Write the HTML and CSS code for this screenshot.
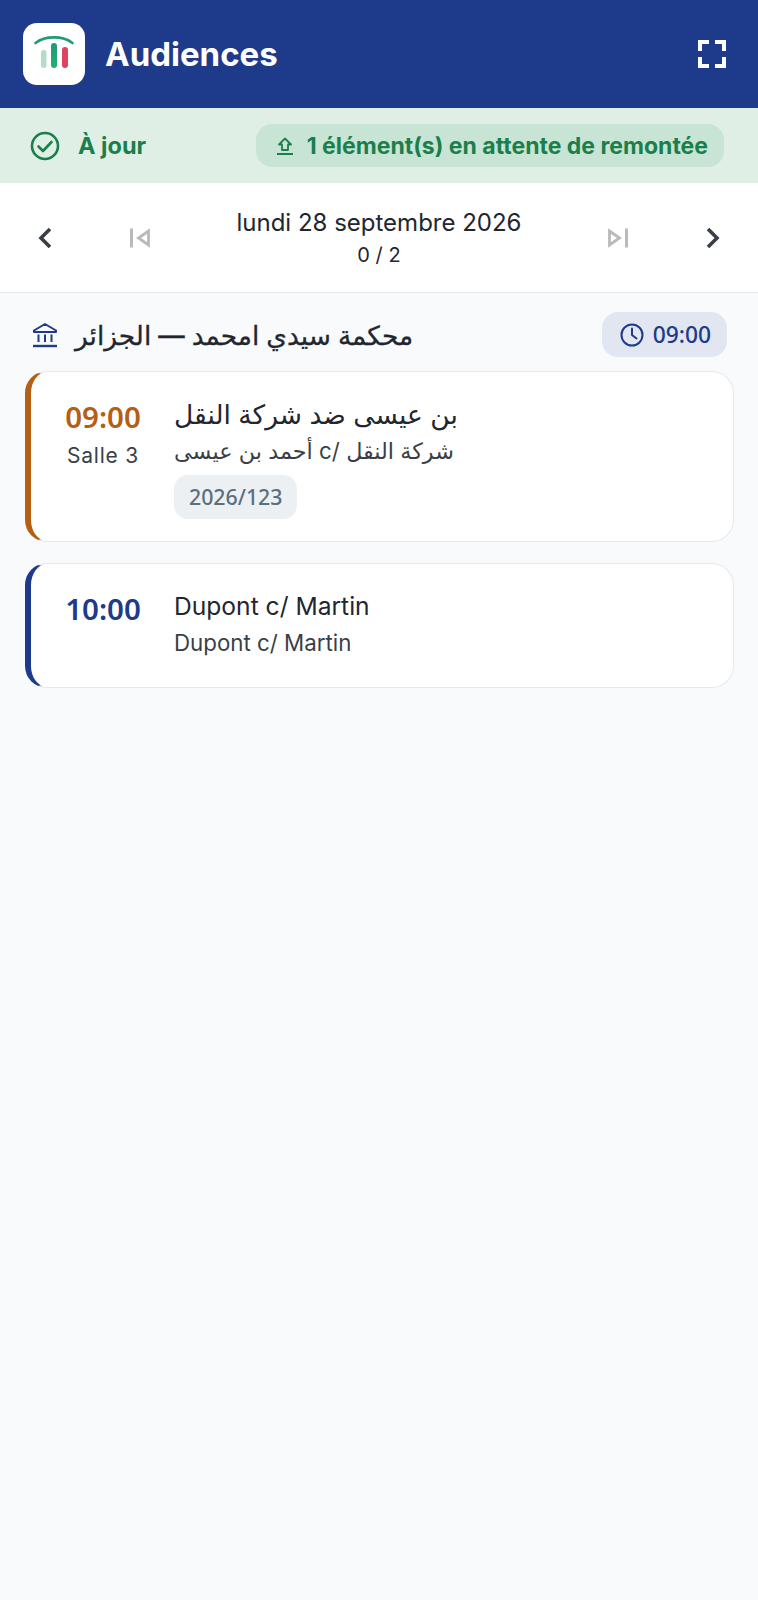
FILE: index.html
```html
<!DOCTYPE html>
<html lang="fr">
<head>
    <meta charset="UTF-8">
    <meta name="viewport" content="width=device-width, initial-scale=1.0">
    <title>Audiences</title>
    <link rel="stylesheet" href="styles.css">
</head>
<body>
    <header class="app-bar">
        <div class="logo">
            <svg width="62" height="62" viewBox="0 0 62 62" fill="none">
                <defs>
                    <linearGradient id="barGreen" x1="0" y1="0" x2="0" y2="1">
                        <stop offset="0" stop-color="#1f9a78"/>
                        <stop offset="1" stop-color="#27ad72"/>
                    </linearGradient>
                </defs>
                <path d="M12.5 20 C 22 12.5, 40 12.5, 49.5 20" stroke="#1f9a78" stroke-width="2.6" stroke-linecap="round"/>
                <rect x="18" y="27" width="5.5" height="18" rx="2.75" fill="#b5dccb"/>
                <rect x="28" y="20" width="6" height="25" rx="3" fill="url(#barGreen)"/>
                <rect x="39" y="24" width="6" height="21" rx="3" fill="#e0435f"/>
            </svg>
        </div>
        <h1>Audiences</h1>
        <svg class="fullscreen" width="28" height="28" viewBox="0 0 28 28" fill="none" stroke="#fff" stroke-width="4">
            <path d="M2 11 V2 H11 M17 2 H26 V11 M26 17 V26 H17 M11 26 H2 V17"/>
        </svg>
    </header>

    <div class="sync-bar">
        <div class="sync-state">
            <svg width="30" height="30" viewBox="0 0 30 30" fill="none" stroke="#1a7f4b" stroke-width="2.6">
                <circle cx="15" cy="15" r="13"/>
                <path d="M8.5 15.5 L13 20 L21.5 11" stroke-linecap="round" stroke-linejoin="round"/>
            </svg>
            <span>À jour</span>
        </div>
        <div class="pending">
            <svg width="18" height="20" viewBox="0 0 18 20" fill="none" stroke="#1a7f4b" stroke-width="1.8">
                <path d="M9 2.5 L15 8.5 H12 V14 H6 V8.5 H3 Z" stroke-linejoin="round"/>
                <path d="M1 18 H17" stroke-width="2"/>
            </svg>
            <span>1 élément(s) en attente de remontée</span>
        </div>
    </div>

    <nav class="day-nav">
        <svg class="chevron" width="20" height="24" viewBox="0 0 20 24" fill="none" stroke="#3a3f47" stroke-width="3.6">
            <path d="M15 3 L6 12 L15 21"/>
        </svg>
        <svg class="skip" width="22" height="22" viewBox="0 0 22 22" fill="none" stroke="#b8babc" stroke-width="2.8">
            <path d="M2.5 1.5 V20.5" stroke-width="3"/>
            <path d="M19.5 4 V18 L9.5 11 Z"/>
        </svg>
        <div class="day-label">
            <div class="day-date">lundi 28 septembre 2026</div>
            <div class="day-count">0 / 2</div>
        </div>
        <svg class="skip" width="22" height="22" viewBox="0 0 22 22" fill="none" stroke="#b8babc" stroke-width="2.8">
            <path d="M19.5 1.5 V20.5" stroke-width="3"/>
            <path d="M2.5 4 V18 L12.5 11 Z"/>
        </svg>
        <svg class="chevron" width="20" height="24" viewBox="0 0 20 24" fill="none" stroke="#3a3f47" stroke-width="3.6">
            <path d="M5 3 L14 12 L5 21"/>
        </svg>
    </nav>

    <main class="content">
        <div class="court-head">
            <svg width="26" height="26" viewBox="0 0 26 26" fill="none" stroke="#1e3a8a" stroke-width="2">
                <path d="M13 2 L24 8.5 V10 H2 V8.5 Z" stroke-linejoin="round"/>
                <path d="M6.5 12.5 V20 M13 12.5 V20 M19.5 12.5 V20"/>
                <path d="M1 24 H25" stroke-width="2.4"/>
            </svg>
            <h2>محكمة سيدي امحمد — الجزائر</h2>
            <div class="first-time">
                <svg width="24" height="24" viewBox="0 0 24 24" fill="none" stroke="#1e3a8a" stroke-width="2">
                    <circle cx="12" cy="12" r="10.5"/>
                    <path d="M12 5.5 V12 L16.5 15.5" stroke-linecap="round" stroke-linejoin="round"/>
                </svg>
                <span>09:00</span>
            </div>
        </div>

        <article class="hearing hearing-late">
            <div class="hearing-time">
                <div class="time">09:00</div>
                <div class="room">Salle 3</div>
            </div>
            <div class="hearing-body">
                <div class="case-title case-title-ar">بن عيسى ضد شركة النقل</div>
                <div class="case-parties">أحمد بن عيسى c/ شركة النقل</div>
                <span class="case-ref">2026/123</span>
            </div>
        </article>

        <article class="hearing">
            <div class="hearing-time">
                <div class="time">10:00</div>
            </div>
            <div class="hearing-body">
                <div class="case-title">Dupont c/ Martin</div>
                <div class="case-parties">Dupont c/ Martin</div>
            </div>
        </article>
    </main>
</body>
</html>
```

FILE: styles.css
```css
:root {
    --navy: #1e3a8a;
    --green: #1a7f4b;
    --amber: #b45f14;
    --ink: #22262e;
    --page-bg: #f8fafc;
}

* {
    box-sizing: border-box;
}

html, body {
    height: 100%;
}

body {
    margin: 0;
    font-family: Inter, "DejaVu Sans", sans-serif;
    background-color: var(--page-bg);
    color: var(--ink);
}

.app-bar {
    height: 108px;
    background: var(--navy);
    display: flex;
    align-items: center;
    padding: 0 32px 0 23px;
}

.logo {
    width: 62px;
    height: 62px;
    background: white;
    border-radius: 14px;
    margin-right: 20px;
}

.logo svg {
    display: block;
}

h1 {
    margin: 0;
    flex: 1;
    color: white;
    font-size: 33px;
    font-weight: 700;
}

.sync-bar {
    height: 75px;
    background: #e0efe6;
    display: flex;
    align-items: center;
    justify-content: space-between;
    padding: 0 34px 0 30px;
    color: var(--green);
    font-weight: 700;
}

.sync-state {
    display: flex;
    align-items: center;
    gap: 18px;
    font-size: 23.5px;
}

.pending {
    display: flex;
    align-items: center;
    gap: 13px;
    height: 43px;
    padding: 0 16px 0 20px;
    background: #c8e4d4;
    border-radius: 16px;
    font-size: 23px;
}

.day-nav {
    height: 110px;
    background: white;
    border-bottom: 1px solid #e2e5e9;
    display: flex;
    align-items: center;
    padding: 0 35px;
}

.chevron:first-child {
    margin-right: 74px;
}

.chevron:last-child {
    margin-left: 74px;
}

.day-label {
    flex: 1;
    text-align: center;
}

.day-date {
    font-size: 24px;
    line-height: 34px;
}

.day-count {
    font-size: 20px;
    line-height: 30px;
}

.content {
    padding: 19px 24px 0;
}

.court-head {
    display: flex;
    align-items: center;
    height: 45px;
    margin-bottom: 14px;
    padding: 0 7px 0 8px;
}

h2 {
    margin: 0 0 0 17px;
    flex: 1;
    font-size: 26.4px;
    font-weight: 500;
    -webkit-text-stroke: 0.3px var(--ink);
}

.first-time {
    display: flex;
    align-items: center;
    gap: 9px;
    height: 45px;
    padding: 0 16px 0 18px;
    background: #e1e6f0;
    border-radius: 16px;
    color: var(--navy);
    font-family: "Noto Sans", sans-serif;
    font-size: 22.8px;
    font-weight: 500;
}

.hearing {
    display: flex;
    min-height: 125px;
    margin-left: 1px;
    background: white;
    border: 1px solid #e5e8ec;
    border-left: 6px solid var(--navy);
    border-radius: 22px;
    padding: 22px 20px 22px 0;
    margin-bottom: 21px;
}

.hearing-late {
    border-left-color: var(--amber);
}

.hearing-time {
    width: 143px;
    padding: 3px 3px 0 4px;
    text-align: center;
    flex-shrink: 0;
}

.time {
    font-family: "Noto Sans", sans-serif;
    font-size: 29.5px;
    font-weight: 600;
    line-height: 40px;
    color: var(--navy);
}

.hearing-late .time {
    color: var(--amber);
}

.room {
    margin-top: 2px;
    font-size: 21px;
    line-height: 34px;
    letter-spacing: 0.8px;
    color: #3a3f47;
}

.case-title {
    font-size: 24.6px;
    line-height: 40px;
}

.case-title-ar {
    font-size: 26.5px;
}

.case-parties {
    font-size: 22.3px;
    line-height: 34px;
    color: #3a3f47;
}

.case-ref {
    display: inline-block;
    margin-top: 7px;
    padding: 0 15px;
    line-height: 44px;
    background: #edf0f3;
    border-radius: 14px;
    color: #5b6f7c;
    font-family: "Noto Sans", sans-serif;
    font-size: 21.3px;
    font-weight: 500;
}
```
